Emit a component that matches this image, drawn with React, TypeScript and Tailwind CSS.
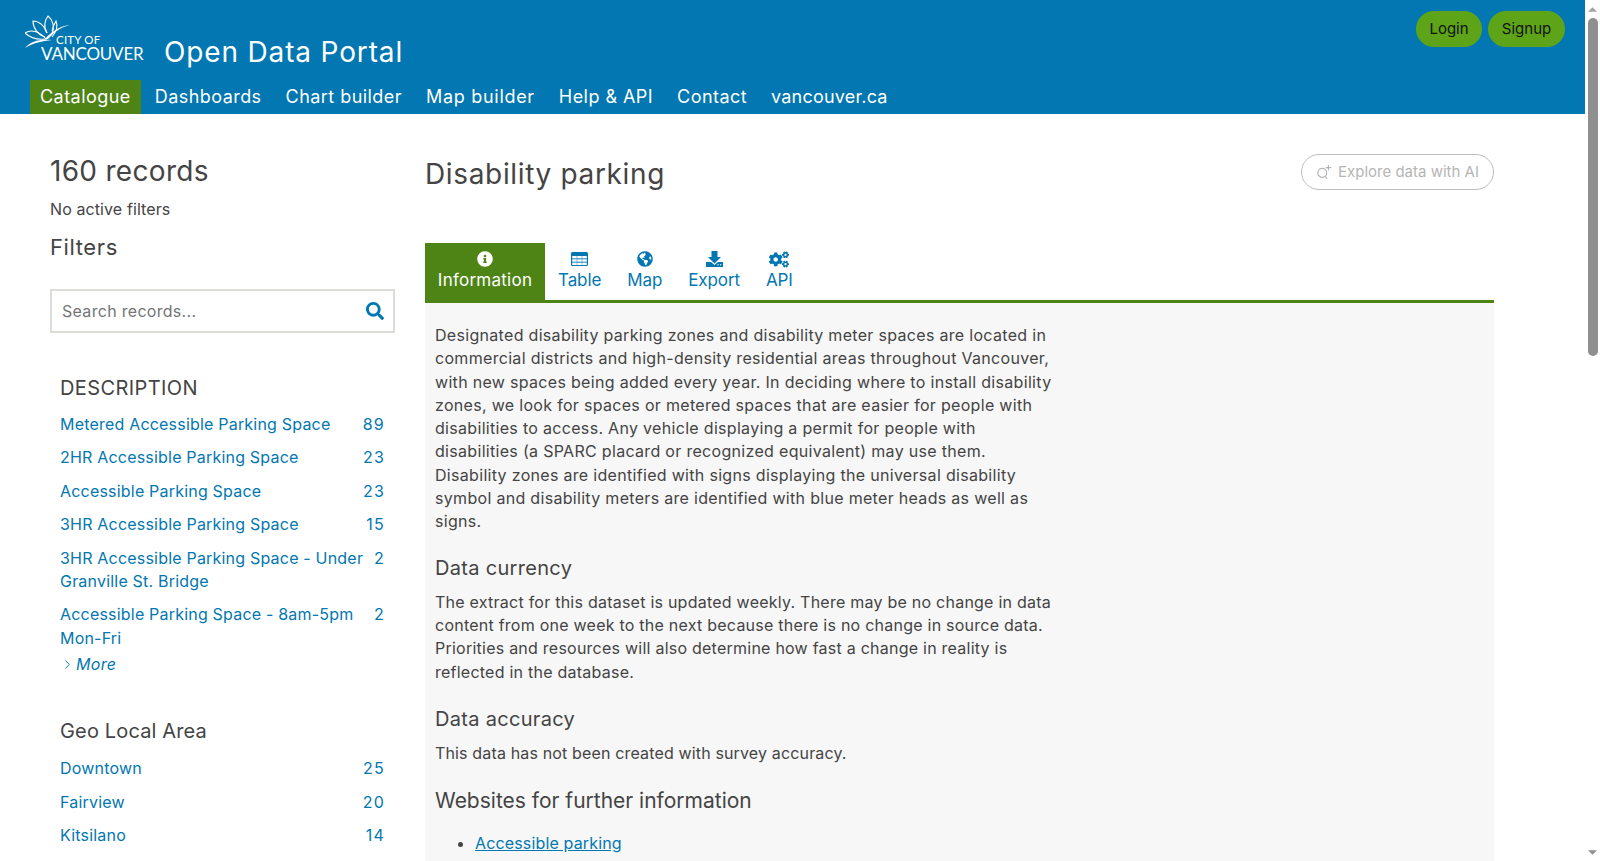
import React from "react";
import { FaInfoCircle, FaGlobeAmericas, FaCogs, FaSearch } from "react-icons/fa";
import { ChevronRight } from "lucide-react";

const font = { fontFamily: "Inter, 'Noto Sans', sans-serif" };

const TableIcon = () => (
	<svg viewBox="0 0 17 14" className="w-[17px] h-[14px]">
		<rect width="17" height="14" rx="1.5" fill="currentColor" />
		{[4, 7.3, 10.6].map((y) =>
			[1.2, 6.2, 11.2].map((x) => <rect key={`${x}-${y}`} x={x} y={y} width="4.6" height="2.4" fill="white" />)
		)}
	</svg>
);

const ExportIcon = () => (
	<svg viewBox="0 0 17 16" className="w-[17px] h-[16px]" fill="currentColor">
		<path d="M5.5 0 H11.5 V6 H15 L8.5 12.5 L2 6 H5.5 Z" />
		<path d="M0 11 H5 L8.5 14 L12 11 H17 V16 H0 Z" />
		<rect x="11.5" y="13.2" width="1.2" height="1.2" fill="white" />
		<rect x="14" y="13.2" width="1.2" height="1.2" fill="white" />
	</svg>
);

const tabs = [
	{ label: "Table", icon: <TableIcon /> },
	{ label: "Map", icon: <FaGlobeAmericas className="w-[16px] h-[16px]" /> },
	{ label: "Export", icon: <ExportIcon /> },
	{ label: "API", icon: <FaCogs className="w-[20px] h-[19px]" /> },
];

const Logo = () => (
	<div className="relative w-[120px] h-[50px] shrink-0 text-white" style={{ fontFamily: "Lato, sans-serif" }}>
		<svg viewBox="0 0 46 34" className="absolute left-0 top-0 w-[46px] h-[34px]" fill="none" stroke="white" strokeWidth="1.1">
			<path d="M20 22 C13 20 8 13 8 6 C14 6 20 11 22 18" />
			<path d="M22 18 C18 12 20 5 23 1 C28 5 30 12 27 19 L24 22" />
			<path d="M27 16 C28 12 29 9 31 6 C33 11 32 16 27 22" />
			<path d="M0 18 C6 14 14 16 21 24 C12 25 5 23 0 18 Z" />
			<path d="M20 24 C28 15 36 11 45 10 C36 12 29 17 23 24 Z" fill="white" stroke="none" />
			<path d="M0 33 C6 26 14 24 27 25 C17 26 8 28 0 33 Z" fill="white" stroke="none" />
		</svg>
		<span className="absolute left-[31px] top-[19px] text-[11.5px] leading-[12px] whitespace-nowrap tracking-[0.2px]">CITY OF</span>
		<span className="absolute left-[16px] top-[31px] text-[17px] leading-[16px] whitespace-nowrap tracking-[-0.2px]">VANCOUVER</span>
	</div>
);

const FacetRow = ({ label, count }: { label: React.ReactNode; count: number }) => (
	<div className="flex justify-between items-start pb-[10px] leading-[23.4px]">
		<a className="text-[#0277b1] whitespace-nowrap tracking-[0.2px]">{label}</a>
		<span className="text-[#0277b1] tracking-[1.2px]">{count}</span>
	</div>
);

export default function App() {
	return (
		<div className="flex h-screen overflow-hidden bg-white text-[#444] text-[16px] tracking-[0.31px]" style={font}>
			<div className="flex-1 min-w-0 overflow-hidden">
				<header className="bg-[#0277b1] h-[114px] text-white relative">
					<div className="flex items-start pl-[25px] pt-[15px] h-[80px]">
						<Logo />
						<h1 className="ml-[19px] mt-[18px] text-[28px] leading-[38px] tracking-[0.85px]">Open Data Portal</h1>
					</div>
					<nav className="flex pl-[30px] h-[34px] text-[18px] leading-[34px] tracking-[0.45px]">
						<a className="bg-[#4e8416] px-[10px] mr-[4px]">Catalogue</a>
						<a className="px-[10px] mr-[4px]">Dashboards</a>
						<a className="px-[10px] mr-[4px]">Chart builder</a>
						<a className="px-[10px] mr-[4px] tracking-[0.7px]">Map builder</a>
						<a className="px-[10px] mr-[4px]">Help &amp; API</a>
						<a className="px-[10px] mr-[4px]">Contact</a>
						<a className="px-[10px] mr-[4px] tracking-[0.2px]">vancouver.ca</a>
					</nav>
					<div className="absolute right-[20px] top-[11px] flex gap-[6px] text-[#111] text-[15px] tracking-normal">
						<button className="bg-[#5ea418] rounded-full h-[36px] w-[66px]">Login</button>
						<button className="bg-[#5ea418] rounded-full h-[36px] w-[77px]">Signup</button>
					</div>
				</header>

				<main className="flex pl-[50px] pr-[91px]">
					<aside className="w-[345px] shrink-0 pt-[40px]">
						<h2 className="text-[28px] leading-[34px] tracking-[0.3px]">160 records</h2>
						<p className="mt-[10px] leading-[23px] tracking-[0.1px]">No active filters</p>
						<h3 className="mt-[11px] text-[22px] leading-[30px] tracking-[0.6px]">Filters</h3>
						<div className="mt-[27px] h-[44px] border-2 border-[#dcdcd8] flex items-center justify-between pl-[10px] pr-[9px]">
							<span className="text-[#757575] text-[16px] tracking-[0.3px]">Search records...</span>
							<FaSearch className="w-[18px] h-[18px] text-[#0277b1]" />
						</div>
						<div className="px-[10px] mt-[41px]">
							<h4 className="text-[20px] leading-[28px] mb-[11px] tracking-[0.4px]">DESCRIPTION</h4>
							<FacetRow label="Metered Accessible Parking Space" count={89} />
							<FacetRow label="2HR Accessible Parking Space" count={23} />
							<FacetRow label="Accessible Parking Space" count={23} />
							<FacetRow label="3HR Accessible Parking Space" count={15} />
							<FacetRow label={<>3HR Accessible Parking Space - Under<br />Granville St. Bridge</>} count={2} />
							<FacetRow label={<>Accessible Parking Space - 8am-5pm<br />Mon-Fri</>} count={2} />
							<a className="flex items-center -mt-[8px] italic text-[#0277b1]"><ChevronRight className="w-[15px] h-[15px] mr-[1px]" strokeWidth={1.5} />More</a>
							<h4 className="mt-[41px] text-[20px] leading-[28px] mb-[12px] tracking-[0.15px]">Geo Local Area</h4>
							<FacetRow label="Downtown" count={25} />
							<FacetRow label="Fairview" count={20} />
							<FacetRow label="Kitsilano" count={14} />
							<FacetRow label="Mount Pleasant" count={11} />
						</div>
					</aside>

					<section className="flex-1 min-w-0 ml-[30px] pt-[40px]">
						<div className="flex justify-between items-start h-[89px]">
							<h1 className="text-[28px] leading-[40px] tracking-[0.65px]">Disability parking</h1>
							<button className="h-[36px] w-[193px] rounded-full border border-[#bdbdbd] text-[#b5b5b5] text-[15px] tracking-normal flex items-center justify-center gap-[6px]">
								<svg viewBox="0 0 18 18" className="w-[16px] h-[16px]" fill="none" stroke="#b5b5b5" strokeWidth="1.4">
									<circle cx="7" cy="10" r="5" />
									<path d="M10.5 14 L12.5 16.5" />
									<path d="M14 1 L14 7 M11 4 L17 4" />
								</svg>
								Explore data with AI
							</button>
						</div>
						<div className="flex h-[60px] border-b-[3px] border-[#4e8416]">
							<a className="w-[120px] bg-[#4e8416] text-white flex flex-col items-center pt-[7px] text-[17px] tracking-[0.25px]">
								<span className="h-[18px] flex items-center"><FaInfoCircle className="w-[16px] h-[16px]" /></span>
								<span className="leading-[24px]">Information</span>
							</a>
							{tabs.map((t) => (
								<a key={t.label} className="px-[13px] text-[#0277b1] flex flex-col items-center pt-[7px] text-[17px] tracking-[-0.1px]">
									<span className="h-[18px] flex items-center">{t.icon}</span>
									<span className="leading-[24px]">{t.label}</span>
								</a>
							))}
						</div>
						<div className="bg-[#f7f7f7] px-[10px] pt-[21px] pb-[40px] leading-[23.3px]">
							<p>
								Designated disability parking zones and disability meter spaces are located in<br />
								commercial districts and high-density residential areas throughout Vancouver,<br />
								with new spaces being added every year. In deciding where to install disability<br />
								zones, we look for spaces or metered spaces that are easier for people with<br />
								disabilities to access. Any vehicle displaying a permit for people with<br />
								disabilities (a SPARC placard or recognized equivalent) may use them.<br />
								Disability zones are identified with signs displaying the universal disability<br />
								symbol and disability meters are identified with blue meter heads as well as<br />
								signs.
							</p>
							<h3 className="mt-[20px] text-[20px] leading-[28px] mb-[9px]">Data currency</h3>
							<p className="tracking-[0.24px]">
								The extract for this dataset is updated weekly. There may be no change in data<br />
								content from one week to the next because there is no change in source data.<br />
								Priorities and resources will also determine how fast a change in reality is<br />
								reflected in the database.
							</p>
							<h3 className="mt-[21px] text-[20px] leading-[28px] mb-[9px]">Data accuracy</h3>
							<p className="tracking-[0.15px]">This data has not been created with survey accuracy.</p>
							<h3 className="mt-[21px] text-[21px] leading-[30px] mb-[16px] tracking-normal">Websites for further information</h3>
							<ul className="list-disc pl-[40px]">
								<li><a className="text-[#0277b1] underline tracking-[0.15px]">Accessible parking</a></li>
							</ul>
						</div>
					</section>
				</main>
			</div>

			<div className="w-[15px] shrink-0 bg-white flex flex-col items-center h-full">
				<div className="h-[18px] flex items-center justify-center">
					<svg viewBox="0 0 10 5" className="w-[9px] h-[5px]"><path d="M0 5 L5 0 L10 5 Z" fill="#a3a3a3" /></svg>
				</div>
				<div className="w-[10px] h-[338px] bg-[#8f8f8f] rounded-full" />
				<div className="flex-1" />
				<div className="h-[18px] flex items-center justify-center">
					<svg viewBox="0 0 10 5" className="w-[9px] h-[5px]"><path d="M0 0 L5 5 L10 0 Z" fill="#8f8f8f" /></svg>
				</div>
			</div>
		</div>
	);
}
